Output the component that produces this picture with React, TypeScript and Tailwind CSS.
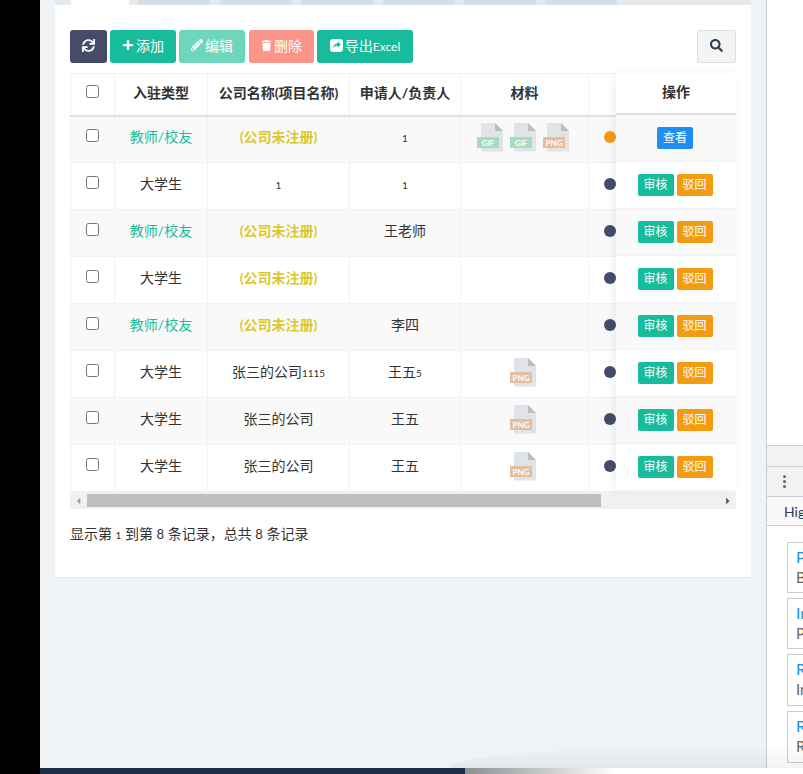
import { FaPlus, FaPencilAlt, FaTrash, FaSearch, FaSync, FaCaretLeft, FaCaretRight } from 'react-icons/fa';

type Row = {
  type: string;
  company: string;
  unregistered?: boolean;
  person: string;
  files: string[];
};

const rows: Row[] = [
  { type: '教师/校友', company: '(公司未注册)', unregistered: true, person: '1', files: ['GIF', 'GIF', 'PNG'] },
  { type: '大学生', company: '1', person: '1', files: [] },
  { type: '教师/校友', company: '(公司未注册)', unregistered: true, person: '王老师', files: [] },
  { type: '大学生', company: '(公司未注册)', unregistered: true, person: '', files: [] },
  { type: '教师/校友', company: '(公司未注册)', unregistered: true, person: '李四', files: [] },
  { type: '大学生', company: '张三的公司1115', person: '王五5', files: ['PNG'] },
  { type: '大学生', company: '张三的公司', person: '王五', files: ['PNG'] },
  { type: '大学生', company: '张三的公司', person: '王五', files: ['PNG'] },
];

function Digits({ text }: { text: string }) {
  return (
    <>
      {text.split(/(\d+)/).map((part, i) =>
        /\d/.test(part) ? (
          <span key={i} className="text-[10px]">
            {part}
          </span>
        ) : (
          part
        ),
      )}
    </>
  );
}

function FileIcon({ ext }: { ext: string }) {
  const label = ext === 'PNG' ? '#e5bd9f' : '#a3dcbf';
  return (
    <svg width="26" height="30" viewBox="0 0 26 30" className="block shrink-0">
      <path d="M4 1h14l8 8v19a1.5 1.5 0 0 1-1.5 1.5h-19A1.5 1.5 0 0 1 4 28z" fill="#e0e4e8" />
      <path d="M18 1l8 8h-8z" fill="#bbbdc0" />
      <rect x="0" y="15" width="22" height="11" fill={label} />
      <text x="11" y="23.5" textAnchor="middle" fontSize="8" fontWeight="700" fill="#fff" fontFamily="Lato, sans-serif">
        {ext}
      </text>
    </svg>
  );
}

function ShareIcon() {
  return (
    <svg width="13" height="13" viewBox="0 0 13 13" className="block shrink-0">
      <rect width="13" height="13" rx="3" fill="#fff" />
      <path d="M7.5 2.5l3.5 3-3.500 3V6.800C5.500 6.800 4.200 7.400 3.200 9c.1-2.800 1.700-4.400 4.300-4.600z" fill="#18bc9c" />
    </svg>
  );
}

function Toolbar() {
  return (
    <div className="flex h-[33px] items-stretch text-[14px] text-white">
      <button className="flex w-[37px] items-center justify-center rounded-[3px] bg-[#444c69] pb-[2px]">
        <FaSync className="text-[13px]" />
      </button>
      <button className="ml-[3px] flex w-[66px] items-center justify-center gap-[2px] rounded-[3px] bg-[#18bc9c] pb-[3px]">
        <FaPlus className="text-[12px]" />
        添加
      </button>
      <button className="ml-[3px] flex w-[66px] items-center justify-center gap-[2px] rounded-[3px] bg-[#6fd6be] pb-[3px]">
        <FaPencilAlt className="text-[12px]" />
        编辑
      </button>
      <button className="ml-1 flex w-[65px] items-center justify-center gap-[2px] rounded-[3px] bg-[#fb9489] pb-[3px]">
        <FaTrash className="text-[11px]" />
        删除
      </button>
      <button className="ml-[3px] flex w-[96px] items-center justify-center gap-[2px] rounded-[3px] bg-[#18bc9c] pb-[3px]">
        <ShareIcon />
        <span>
          导出<span className="text-[12px]">Excel</span>
        </span>
      </button>
      <button className="ml-auto flex w-[39px] items-center justify-center rounded-[3px] border border-[#ddd] bg-[#f4f4f4] pb-[2px] text-[#2c3e50]">
        <FaSearch className="text-[13px]" />
      </button>
    </div>
  );
}

function DataTable() {
  return (
    <div className="relative mt-[10px] w-[666px]">
      <div className="overflow-hidden">
        <table className="w-[760px] table-fixed border-collapse text-center text-[14px] text-[#333]">
          <colgroup>
            <col className="w-[44px]" />
            <col className="w-[93px]" />
            <col className="w-[142px]" />
            <col className="w-[111px]" />
            <col className="w-[128px]" />
            <col className="w-[44px]" />
            <col />
          </colgroup>
          <thead>
            <tr className="h-[42px] border-b-2 border-[#e0e0e0] font-bold">
              <th className="border border-b-0 border-[#f2f2f2]">
                <input type="checkbox" readOnly className="mx-auto block size-[13px] -translate-y-[3px]" />
              </th>
              <th className="border border-b-0 border-[#f2f2f2] pb-[3px]">入驻类型</th>
              <th className="border border-b-0 border-[#f2f2f2] pb-[3px]">公司名称(项目名称)</th>
              <th className="border border-b-0 border-[#f2f2f2] pb-[3px]">申请人/负责人</th>
              <th className="border border-b-0 border-[#f2f2f2] pb-[3px]">材料</th>
              <th className="border border-b-0 border-[#f2f2f2]" />
              <th />
            </tr>
          </thead>
          <tbody>
            {rows.map((row, idx) => (
              <tr key={idx} className={idx % 2 === 0 ? 'h-[47px] bg-[#f9f9f9]' : 'h-[47px] bg-white'}>
                <td className="border border-[#f2f2f2] pb-1">
                  <input type="checkbox" readOnly className="mx-auto block size-[13px] -translate-y-[2px]" />
                </td>
                <td className={row.type === '大学生' ? 'border border-[#f2f2f2] pb-1.5' : 'border border-[#f2f2f2] pb-1.5 text-[#18bc9c]'}>
                  {row.type}
                </td>
                <td className={row.unregistered ? 'border border-[#f2f2f2] pb-1.5 font-bold text-[#d9c92a]' : 'border border-[#f2f2f2] pb-1.5'}>
                  <Digits text={row.company} />
                </td>
                <td className="border border-[#f2f2f2] pb-1.5">
                  <Digits text={row.person} />
                </td>
                <td className="border border-[#f2f2f2] pb-1">
                  <div className="flex justify-center gap-[7px] pr-[3px]">
                    {row.files.map((ext, i) => (
                      <FileIcon key={i} ext={ext} />
                    ))}
                  </div>
                </td>
                <td className="border border-[#f2f2f2] pb-1">
                  <span className={idx === 0 ? 'ml-[15px] block size-3 rounded-full bg-[#f39c12]' : 'ml-[15px] block size-3 rounded-full bg-[#444c69]'} />
                </td>
                <td />
              </tr>
            ))}
          </tbody>
        </table>
      </div>

      {/* fixed right column sits over the scrolling table */}
      <div className="absolute top-0 left-[546px] w-[120px] bg-white text-[14px] text-[#333] shadow-[-3px_0_10px_rgba(0,0,0,0.06)]">
        <div className="flex h-[42px] items-center justify-center border-b-2 border-[#e0e0e0] pb-[3px] font-bold">操作</div>
        {rows.map((row, idx) => (
          <div
            key={idx}
            className={idx % 2 === 0 ? 'flex h-[47px] items-center justify-center gap-[3px] border-b border-[#f2f2f2] bg-[#f9f9f9] pr-[2px] text-[12px] text-white' : 'flex h-[47px] items-center justify-center gap-[3px] border-b border-[#f2f2f2] bg-white pr-[2px] text-[12px] text-white'}
          >
            {idx === 0 ? (
              <span className="flex h-[22px] w-[36px] items-center justify-center rounded-[2px] bg-[#1e8ff0]">查看</span>
            ) : (
              <>
                <span className="flex h-[22px] w-[36px] items-center justify-center rounded-[2px] bg-[#18bc9c]">审核</span>
                <span className="flex h-[22px] w-[36px] items-center justify-center rounded-[2px] bg-[#f39c12]">驳回</span>
              </>
            )}
          </div>
        ))}
      </div>

      <div className="flex h-[17px] items-center bg-[#f1f1f1] text-[#555]">
        <FaCaretLeft className="ml-[4px] w-[9px] text-[10px] text-[#a09a9a]" />
        <div className="ml-[4px] h-[13px] w-[514px] bg-[#bebebe]" />
        <FaCaretRight className="mr-[3px] ml-auto w-[10px] text-[10px]" />
      </div>
    </div>
  );
}

function SidePanel() {
  const cards = [
    ['Pr', 'Br', 'h-[51px]'],
    ['In', 'Pr', 'h-[51px]'],
    ['Re', 'In', 'h-[52px]'],
    ['Re', 'Re', 'h-[52px]'],
  ];
  return (
    <div className="flex w-[37px] shrink-0 flex-col overflow-hidden border-l border-[#c8ccd0] bg-white text-[13px]">
      <div className="h-[445px] shrink-0" />
      <div className="h-[22px] shrink-0 border-y border-[#cdd0d4] bg-[#f1f2f4]" />
      <div className="flex h-[30px] shrink-0 items-center border-b border-[#cdd0d4] bg-[#f1f2f4] pl-[16px]">
        <span className="flex flex-col gap-[2px]">
          <i className="block size-[3px] rounded-full bg-[#666]" />
          <i className="block size-[3px] rounded-full bg-[#666]" />
          <i className="block size-[3px] rounded-full bg-[#666]" />
        </span>
      </div>
      <div className="flex h-[29px] shrink-0 items-center border-b border-[#cdd0d4] bg-[#f8f8f9] pl-[17px] whitespace-nowrap text-[14px] text-[#2c3e50]">
        Highlights
      </div>
      <div className="mt-4 flex flex-col gap-[5px] pl-[20px]">
        {cards.map(([title, sub, height], idx) => (
          <div key={idx} className={'w-[60px] shrink-0 border border-[#c8ccd0] pt-[3px] pl-[8px] text-[16px] leading-[21px] ' + height}>
            <div className="text-[#1e90e0]">{title}</div>
            <div className="text-[15px] text-[#666]">{sub}</div>
          </div>
        ))}
      </div>
    </div>
  );
}

export default function App() {
  return (
    <div className="relative flex h-[774px] w-[803px] overflow-hidden bg-white font-['Lato','Noto_Sans_CJK_SC',sans-serif]">
      <div className="w-10 shrink-0 bg-black" />
      <div className="flex min-w-0 flex-1 flex-col">
        <div className="flex min-h-0 flex-1">
          <main className="min-w-0 flex-1 bg-[#eff3f6] px-[15px]">
            <div className="rounded-b-[3px] bg-white shadow-[0_1px_1px_rgba(0,0,0,0.05)]">
              <div className="flex h-[5px] gap-[9.4px] bg-[#e5eaee] pl-4">
                <div className="w-[58px] bg-white" />
                <div className="w-[72px] bg-[#d6dee6]" />
                <div className="w-[72px] bg-[#d6dee6]" />
                <div className="w-[72px] bg-[#d6dee6]" />
                <div className="w-[72px] bg-[#d6dee6]" />
                <div className="w-[72px] bg-[#d6dee6]" />
                <div className="w-[72px] bg-[#d6dee6]" />
              </div>
              <div className="h-[572px] px-[15px] pt-[25px]">
                <Toolbar />
                <DataTable />
                <p className="mt-4 text-[14px] leading-[18px] text-[#333]">
                  显示第 <span className="text-[10px]">1</span> 到第 <span className="text-[13px]">8</span> 条记录，总共 <span className="text-[13px]">8</span> 条记录
                </p>
              </div>
            </div>
          </main>
          <SidePanel />
        </div>
        <div className="flex h-[6px] shrink-0">
          <div className="w-[425px] bg-[#1b2d44]" />
          <div className="w-[150px] bg-gradient-to-r from-[#8c9092] to-white" />
        </div>
      </div>
      <div className="pointer-events-none absolute right-0 bottom-[6px] left-[450px] h-6 rounded-tl-[100%] bg-gradient-to-t from-black/5 to-transparent" />
    </div>
  );
}
